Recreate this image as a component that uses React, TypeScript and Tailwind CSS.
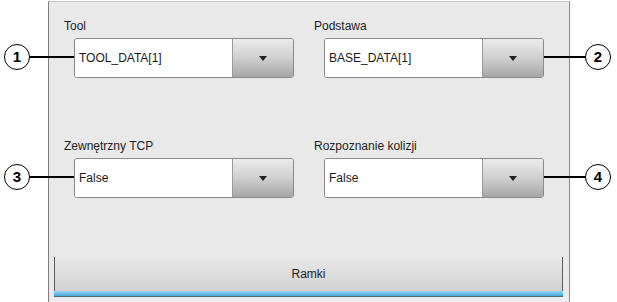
import React from "react";

function Combo({ value }: { value: string }) {
  return (
    <div className="flex h-[40px] w-[220px] ml-[10px] rounded-[3px] border border-[#8a8a8a] overflow-hidden">
      <div className="flex-1 bg-white flex items-center pl-[4px] text-[12px] text-[#1a1a1a] border-r border-[#9a9a9a]">
        {value}
      </div>
      <div className="w-[60px] flex items-center justify-center bg-gradient-to-b from-[#ececec] via-[#cfcfcf] to-[#a6a6a6]">
        <svg width="8" height="5" viewBox="0 0 8 5">
          <path d="M0 0 L8 0 L4 5 Z" fill="#222" />
        </svg>
      </div>
    </div>
  );
}

function Field({ label, value }: { label: string; value: string }) {
  return (
    <div className="flex flex-col">
      <div className="h-[16px] leading-[16px] text-[12px] text-[#222] mb-[4px]">{label}</div>
      <Combo value={value} />
    </div>
  );
}

function Callout({ n, x, y, lineFrom, lineTo }: { n: string; x: number; y: number; lineFrom: number; lineTo: number }) {
  return (
    <>
      <div
        className="absolute h-[1.5px] bg-black"
        style={{ left: lineFrom, top: y - 1, width: lineTo - lineFrom }}
      />
      <div
        className="absolute w-[26px] h-[26px] rounded-full border-[1.7px] border-black bg-white flex items-center justify-center text-[15px] font-bold text-black"
        style={{ left: x - 13, top: y - 13 }}
      >
        {n}
      </div>
    </>
  );
}

export default function App() {
  return (
    <div
      className="relative w-[617px] h-[302px] bg-white overflow-hidden"
      style={{ fontFamily: '"Liberation Sans", Arial, sans-serif' }}
    >
      <div className="ml-[48px] mt-[1px] w-[522px] h-[310px] bg-[#e9e9ea] border-l border-r border-t border-l-[#7e7e7e] border-r-[#8a8a8a] border-t-[#c4c4c4] flex flex-col">
        <div className="grid grid-cols-[250px_1fr] pl-[15px] pt-[16px]">
          <Field label="Tool" value="TOOL_DATA[1]" />
          <Field label="Podstawa" value="BASE_DATA[1]" />
        </div>
        <div className="grid grid-cols-[250px_1fr] pl-[15px] pt-[60px]">
          <Field label="Zewnętrzny TCP" value="False" />
          <Field label="Rozpoznanie kolizji" value="False" />
        </div>
        <div className="mt-[59px] mx-[5px] mr-[6px] flex flex-col">
          <div className="h-[34px] border-l border-r border-[#5c5c5c] bg-gradient-to-b from-[#e8e8e8] to-[#d2d2d2] flex items-center justify-center text-[12px] text-[#222]">
            Ramki
          </div>
          <div className="h-[5px] bg-gradient-to-b from-[#9ad8f2] to-[#3ea4db]" />
          <div className="h-[1px] bg-[#506874]" />
        </div>
        <div className="flex-1 bg-[#eeebf1]" />
      </div>

      <Callout n="1" x={17} y={57} lineFrom={29} lineTo={74} />
      <Callout n="2" x={598} y={57} lineFrom={544} lineTo={586} />
      <Callout n="3" x={17} y={177} lineFrom={29} lineTo={74} />
      <Callout n="4" x={598} y={177} lineFrom={544} lineTo={586} />
    </div>
  );
}
